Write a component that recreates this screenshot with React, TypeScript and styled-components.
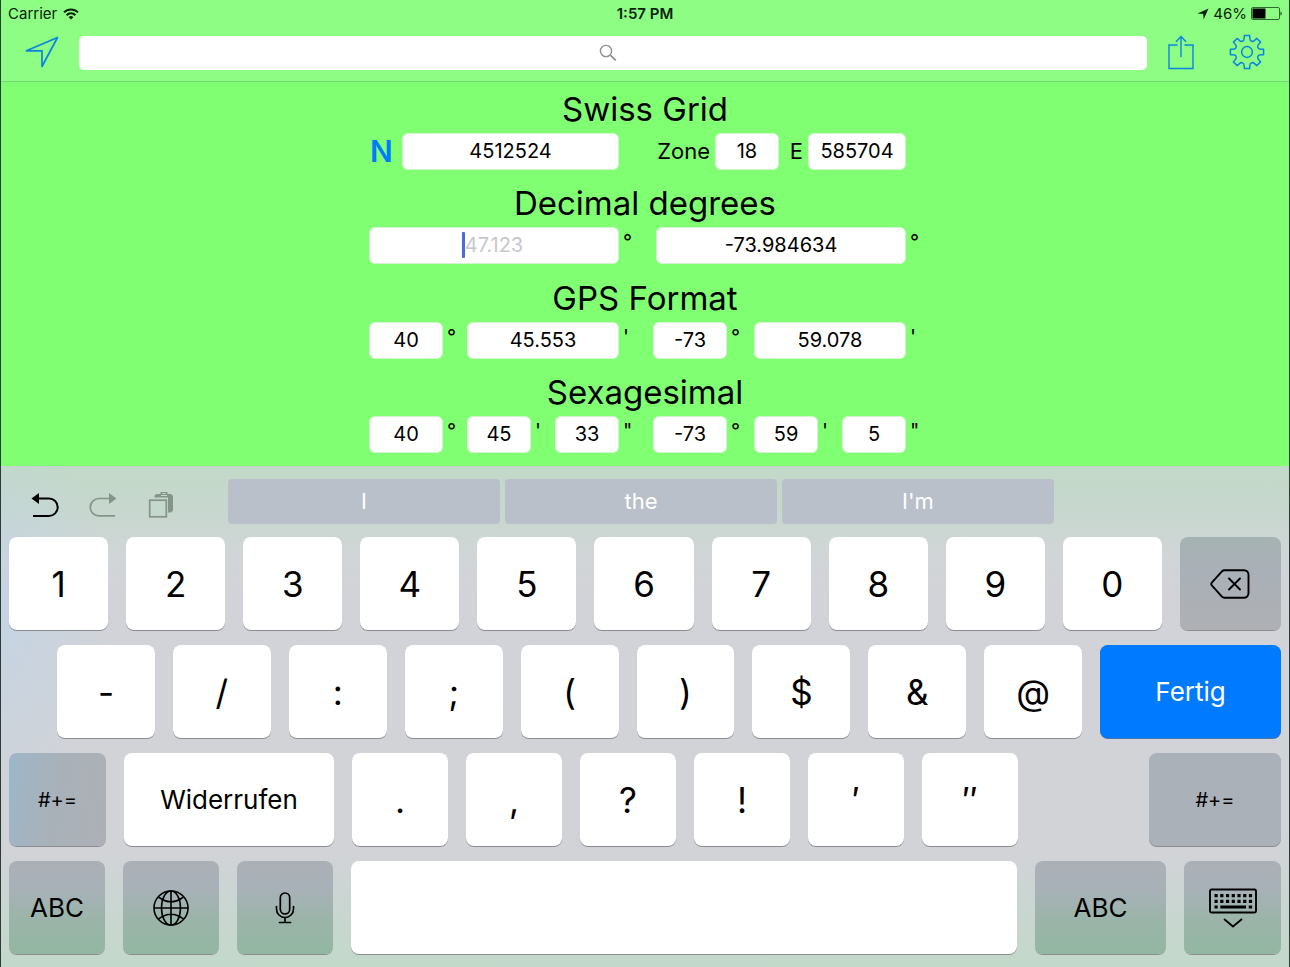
import React from "react";
import styled, { createGlobalStyle, css } from "styled-components";

const BLUE = "#007aff";
const TINT = "#0a84e4";

const GlobalStyle = createGlobalStyle`
  *, *::before, *::after { box-sizing: border-box; }
  html, body, #root { height: 100%; margin: 0; }
  body {
    font-family: Inter, Roboto, "Liberation Sans", sans-serif;
    color: #000;
    background: #80ff72;
  }
  button, input { font: inherit; color: inherit; margin: 0; }
`;

const Screen = styled.div`
  display: flex;
  flex-direction: column;
  min-height: 100vh;
  border: solid #2c3a38;
  border-width: 0 1px;
  background: #80ff72;
`;

const Header = styled.header`
  background: #8efd84;
  border-bottom: 1px solid #72d873;
`;

const StatusBar = styled.div`
  display: grid;
  grid-template-columns: 1fr auto 1fr;
  align-items: center;
  height: 27px;
  padding: 0 7px;
  font-size: 15px;
  line-height: 20px;
  color: #0a230c;
`;

const StatusGroup = styled.div<{ $end?: boolean }>`
  display: flex;
  align-items: center;
  gap: ${(p) => (p.$end ? 4 : 6)}px;
  justify-content: ${(p) => (p.$end ? "flex-end" : "flex-start")};
`;

const Clock = styled.time`
  font-weight: 600;
`;

const NavBar = styled.nav`
  display: flex;
  align-items: center;
  height: 54px;
  padding: 0 24px 2px 23px;
`;

const IconButton = styled.button`
  display: flex;
  align-items: center;
  justify-content: center;
  flex: none;
  width: 36px;
  height: 40px;
  padding: 0 0 2px;
  border: 0;
  background: none;
  color: ${TINT};
`;

const NavActions = styled.div`
  display: flex;
  gap: 30px;
`;

const SearchBox = styled.label`
  position: relative;
  flex: 1;
  margin: 0 16px 0 19px;
  height: 34px;
`;

const SearchInput = styled.input`
  display: block;
  width: 100%;
  height: 100%;
  padding: 0 12px;
  border: 0;
  border-radius: 5px;
  background: #fff;
  font-size: 16px;
  outline: none;
`;

const SearchGlyph = styled.span`
  position: absolute;
  inset: 0;
  display: flex;
  align-items: center;
  justify-content: center;
  padding-right: 10px;
  pointer-events: none;
`;

const Panel = styled.main`
  flex: 1;
  display: flex;
  flex-direction: column;
  justify-content: space-between;
  align-items: center;
  padding: 6px 0 13px;
`;

const Section = styled.section`
  width: 552px;
  max-width: 100%;
`;

const Title = styled.h2`
  margin: 0 0 3px;
  font-size: 33px;
  line-height: 42px;
  font-weight: 400;
  text-align: center;
`;

const Row = styled.div`
  display: flex;
  height: 37px;
`;

const Field = styled.span<{ $w: number }>`
  position: relative;
  flex: none;
  width: ${(p) => p.$w}px;
`;

const TextInput = styled.input`
  display: block;
  width: 100%;
  height: 37px;
  padding: 0 4px 1px;
  border: 1px solid #d3f3cf;
  border-radius: 6px;
  background: #fff;
  font-size: 20px;
  text-align: center;
  outline: none;
  caret-color: transparent;
  &::placeholder { color: #c7c7cd; opacity: 1; }
`;

const Caret = styled.span`
  position: absolute;
  top: 5px;
  left: calc(50% - 32px);
  width: 3px;
  height: 26px;
  border-radius: 1px;
  background: #4a69dc;
`;

const Unit = styled.span<{ $w: number }>`
  flex: none;
  width: ${(p) => p.$w}px;
  padding-left: 4px;
  font-size: 20px;
  line-height: 30px;
`;

const FieldLabel = styled.label<{ $w: number }>`
  flex: none;
  width: ${(p) => p.$w}px;
  padding-right: 5px;
  font-size: 22px;
  line-height: 36px;
  text-align: right;
`;

const Spacer = styled.span<{ $w: number }>`
  flex: none;
  width: ${(p) => p.$w}px;
`;

const HemisphereButton = styled.button`
  flex: none;
  width: 33px;
  padding: 0 8px 0 0;
  border: 0;
  background: none;
  color: ${BLUE};
  font-size: 30px;
  line-height: 37px;
  font-weight: 600;
`;

const Keyboard = styled.section`
  display: flex;
  flex-direction: column;
  gap: 15px;
  padding: 13px 8px;
  background:
    radial-gradient(ellipse 110px 190px at 0 30%, rgba(190, 212, 232, 0.65), rgba(190, 212, 232, 0)),
    linear-gradient(#c2d9c8 0, #c7d7ce 45px, #d1d5d7 90px, #d2d3d8 130px, #d1d3d7 390px, #c8d6d0 450px, #c2d9ca 100%);
`;

const AssistBar = styled.div`
  display: grid;
  grid-template-columns: 219fr 826fr 227fr;
  height: 45px;
  margin-bottom: -2px;
`;

const EditTools = styled.div`
  display: flex;
  align-items: center;
  gap: 22px;
  padding: 6px 0 0 18px;
`;

const ToolButton = styled.button`
  display: flex;
  justify-content: center;
  width: 36px;
  padding: 0;
  border: 0;
  background: none;
  color: #000;
  &:disabled { color: #849488; }
`;

const Suggestions = styled.div`
  display: grid;
  grid-template-columns: repeat(3, 1fr);
  gap: 5px;
`;

const Suggestion = styled.button`
  padding: 0;
  border: 0;
  border-radius: 4px;
  background: #bac0ca;
  color: #fff;
  font-size: 22px;
  line-height: 45px;
`;

const KeyRow = styled.div<{ $inset?: boolean }>`
  display: flex;
  gap: 18px;
  height: 93px;
  padding-left: ${(p) => (p.$inset ? 48 : 0)}px;
`;

type Tone = "light" | "grey" | "greyTop" | "greyLeft" | "greyBottom" | "primary";

const toneBackground: Record<Tone, string> = {
  light: "#fff",
  grey: "#abb1b8",
  greyTop: "linear-gradient(#a5b3b2, #a9b0b7 35%, #aeb0b4)",
  greyLeft: "linear-gradient(100deg, #9db6c9, #a9b1b8 50%, #adb0b6)",
  greyBottom: "linear-gradient(#abb0b6, #a8b1b8 30%, #9cb4aa 60%, #92b7a1)",
  primary: BLUE,
};

const Key = styled.button<{ $grow: number; $tone: Tone; $size: number }>`
  display: flex;
  align-items: center;
  justify-content: center;
  flex: ${(p) => p.$grow} 1 0;
  min-width: 0;
  padding: 0;
  border: 0;
  border-radius: 8px;
  background: ${(p) => toneBackground[p.$tone]};
  box-shadow: 0 1px 0 #8b8d91;
  font-size: ${(p) => p.$size}px;
  line-height: 48px;
  ${(p) =>
    p.$tone === "primary" &&
    css`
      color: #fff;
      box-shadow: 0 1px 0 #4676ad;
    `}
`;

const KeyGap = styled.span<{ $grow: number }>`
  flex: ${(p) => p.$grow} 1 0;
`;

/* ---------- drawings ---------- */

const Wifi = () => (
  <svg width="16" height="12" viewBox="0 0 16 12" fill="none" stroke="#0a230c" strokeWidth="2">
    <path d="M1 4.4a10 10 0 0 1 14 0" />
    <path d="M3.6 7.2a6.2 6.2 0 0 1 8.8 0" />
    <path d="M8 11.6 5.6 9.2a3.4 3.4 0 0 1 4.8 0z" fill="#0a230c" stroke="none" />
  </svg>
);

const SmallArrow = () => (
  <svg width="12" height="12" viewBox="0 0 12 12" fill="#0a230c">
    <path d="M11.5.5 6.6 11.5 6.2 6 .5 5.6z" />
  </svg>
);

const Battery = () => (
  <svg width="31" height="13" viewBox="0 0 31 13">
    <rect x=".5" y=".5" width="28" height="12" rx="1.5" fill="none" stroke="#2c6a2d" />
    <rect x="1.5" y="1.5" width="13" height="10" fill="#000" />
    <path d="M29.500 4.500c1.600.4 1.600 3.600 0 4z" fill="#123d14" />
  </svg>
);

const LocationArrow = () => (
  <svg width="34" height="32" viewBox="0 0 34 32" fill="none" stroke={TINT} strokeWidth="1.7" strokeLinejoin="round">
    <path d="M32.5 1.5 1.5 14.8H17V30.5z" />
  </svg>
);

const Share = () => (
  <svg width="26" height="35" viewBox="0 0 26 35" fill="none" stroke={TINT} strokeWidth="1.4">
    <path d="M9.5 10H1v23.5h24V10h-8.5" />
    <path d="M13 22V1.5M8 6.8l5-5.2 5 5.2" />
  </svg>
);

const gearOutline = (() => {
  const point = (radius: number, degrees: number) => {
    const a = (degrees * Math.PI) / 180;
    return `${(18 + radius * Math.cos(a)).toFixed(2)} ${(18 + radius * Math.sin(a)).toFixed(2)}`;
  };
  let d = "";
  for (let i = 0; i < 8; i++) {
    const a = i * 45 - 90;
    d += `${i ? "L" : "M"}${point(13.8, a - 12)}L${point(16.8, a - 9)}L${point(16.8, a + 9)}L${point(13.8, a + 12)}`;
    d += `C${point(11.2, a + 15)} ${point(11.2, a + 30)} ${point(13.8, a + 33)}`;
  }
  return d + "Z";
})();

const Gear = () => (
  <svg width="36" height="36" viewBox="0 0 36 36" fill="none" stroke={TINT} strokeWidth="1.5" strokeLinejoin="round">
    <path d={gearOutline} />
    <circle cx="18" cy="18" r="5.4" />
  </svg>
);

const Magnifier = () => (
  <svg width="18" height="18" viewBox="0 0 18 18" fill="none" stroke="#8e8e93" strokeWidth="1.4">
    <circle cx="7" cy="7" r="5.6" />
    <path d="m11.2 11.2 5.6 5.2" strokeWidth="1.8" />
  </svg>
);

const Undo = () => (
  <svg width="28" height="26" viewBox="0 0 28 26" fill="none" stroke="currentColor" strokeWidth="2">
    <path d="M6 6.5h12a8.7 8.7 0 0 1 0 17.4H2" />
    <path d="M8 1v11L.5 6.5z" fill="currentColor" stroke="none" />
  </svg>
);

const Redo = () => (
  <svg width="28" height="26" viewBox="0 0 28 26" fill="none" stroke="currentColor" strokeWidth="1.7">
    <path d="M22 6.500H10a8.700 8.700 0 0 0 0 17.400h16" />
    <path d="M20 1v11l7.500-5.500z" fill="currentColor" stroke="none" />
  </svg>
);

const Paste = () => (
  <svg width="26" height="27" viewBox="0 0 26 27">
    <path d="M6.5 6.500V4.500L8.500 3h4V1h7v2h3.500l2 2v14.500l-2 2h-3V6.500z" fill="currentColor" />
    <path d="M13 4.500h6M14.500 2.500h3" stroke="#c4d8cb" strokeWidth="1" />
    <rect x="1.700" y="9.200" width="16.600" height="16.600" fill="#c4d8cd" stroke="currentColor" strokeWidth="1.700" />
  </svg>
);

const Backspace = () => (
  <svg width="40" height="30" viewBox="0 0 40 30" fill="none" stroke="#000" strokeWidth="1.9" strokeLinecap="round" strokeLinejoin="round">
    <path d="M14.5 1.2H34a4.5 4.5 0 0 1 4.5 4.5v18.600a4.500 4.500 0 0 1-4.500 4.500H14.500q-1.500 0-2.600-1.100L1.800 16.300q-1.100-1.300 0-2.600L11.900 2.300q1.100-1.100 2.600-1.100z" />
    <path d="m19 9.500 11 11M30 9.500l-11 11" />
  </svg>
);

const Globe = () => (
  <svg width="36" height="36" viewBox="0 0 36 36" fill="none" stroke="#000" strokeWidth="1.6">
    <circle cx="18" cy="18" r="17" />
    <ellipse cx="18" cy="18" rx="9.5" ry="17" />
    <path d="M18 1v34M1 18h34M5.5 7Q18 16.500 30.500 7M5.500 29Q18 19.500 30.500 29" />
  </svg>
);

const Mic = () => (
  <svg width="20" height="32" viewBox="0 0 20 32" fill="none" stroke="#000" strokeWidth="1.7" strokeLinecap="round">
    <rect x="5.3" y="1" width="9.4" height="21" rx="4.7" />
    <path d="M1.5 14.500V17a8.500 8.500 0 0 0 17 0v-2.500M10 25.500v5M4.500 30.500h11" />
  </svg>
);

const HideKeyboard = () => (
  <svg width="48" height="40" viewBox="0 0 48 40" fill="none" stroke="#000">
    <rect x="1" y="1.500" width="46" height="23" rx="1.500" strokeWidth="1.900" />
    <path d="M5.500 7.600h38" strokeWidth="3.200" strokeDasharray="3.200 2.530" />
    <path d="M5.500 13.300h38" strokeWidth="3.200" strokeDasharray="3.200 2.530" />
    <path d="M5.500 19h3.200M11.300 19h25.800M39.700 19h3.400" strokeWidth="3" />
    <path d="m15 31 9 7.500 9-7.500" strokeWidth="1.800" />
  </svg>
);

/* ---------- parts ---------- */

type NumberFieldProps = {
  label: string;
  width: number;
  value?: string;
  placeholder?: string;
  id?: string;
  active?: boolean;
};

const NumberField = ({ label, width, value, placeholder, id, active }: NumberFieldProps) => (
  <Field $w={width}>
    <TextInput id={id} aria-label={id ? undefined : label} defaultValue={value} placeholder={placeholder} inputMode="decimal" />
    {active && <Caret />}
  </Field>
);

type KeyCapProps = {
  children?: React.ReactNode;
  grow?: number;
  tone?: Tone;
  size?: number;
  label?: string;
};

const KeyCap = ({ children, grow = 99, tone = "light", size = 35, label }: KeyCapProps) => (
  <Key type="button" $grow={grow} $tone={tone} $size={size} aria-label={label}>
    {children}
  </Key>
);

const digits = ["1", "2", "3", "4", "5", "6", "7", "8", "9", "0"];
const symbols = ["-", "/", ":", ";", "(", ")", "$", "&", "@"];
const punctuation = [".", ",", "?", "!", "′", "″"];

export default function App() {
  return (
    <>
      <GlobalStyle />
      <Screen>
        <Header>
          <StatusBar>
            <StatusGroup>
              <span>Carrier</span>
              <Wifi />
            </StatusGroup>
            <Clock>1:57 PM</Clock>
            <StatusGroup $end>
              <SmallArrow />
              <span>46%</span>
              <Battery />
            </StatusGroup>
          </StatusBar>
          <NavBar>
            <IconButton type="button" aria-label="Current location"><LocationArrow /></IconButton>
            <SearchBox>
              <SearchInput type="search" aria-label="Search" />
              <SearchGlyph><Magnifier /></SearchGlyph>
            </SearchBox>
            <NavActions>
              <IconButton type="button" aria-label="Share"><Share /></IconButton>
              <IconButton type="button" aria-label="Settings"><Gear /></IconButton>
            </NavActions>
          </NavBar>
        </Header>

        <Panel>
          <Section>
            <Title>Swiss Grid</Title>
            <Row>
              <HemisphereButton type="button">N</HemisphereButton>
              <NumberField label="Northing" width={217} value="4512524" />
              <Spacer $w={36} />
              <FieldLabel $w={60} htmlFor="zone">Zone</FieldLabel>
              <NumberField id="zone" label="Zone" width={64} value="18" />
              <FieldLabel $w={29} htmlFor="easting">E</FieldLabel>
              <NumberField id="easting" label="Easting" width={98} value="585704" />
            </Row>
          </Section>

          <Section>
            <Title>Decimal degrees</Title>
            <Row>
              <NumberField label="Latitude" width={250} placeholder="47.123" active />
              <Unit $w={37}>°</Unit>
              <NumberField label="Longitude" width={250} value="-73.984634" />
              <Unit $w={15}>°</Unit>
            </Row>
          </Section>

          <Section>
            <Title>GPS Format</Title>
            <Row>
              <NumberField label="Latitude degrees" width={74} value="40" />
              <Unit $w={24}>°</Unit>
              <NumberField label="Latitude minutes" width={152} value="45.553" />
              <Unit $w={34}>'</Unit>
              <NumberField label="Longitude degrees" width={74} value="-73" />
              <Unit $w={27}>°</Unit>
              <NumberField label="Longitude minutes" width={152} value="59.078" />
              <Unit $w={15}>'</Unit>
            </Row>
          </Section>

          <Section>
            <Title>Sexagesimal</Title>
            <Row>
              <NumberField label="Latitude degrees" width={74} value="40" />
              <Unit $w={24}>°</Unit>
              <NumberField label="Latitude minutes" width={64} value="45" />
              <Unit $w={24}>'</Unit>
              <NumberField label="Latitude seconds" width={64} value="33" />
              <Unit $w={34}>"</Unit>
              <NumberField label="Longitude degrees" width={74} value="-73" />
              <Unit $w={27}>°</Unit>
              <NumberField label="Longitude minutes" width={64} value="59" />
              <Unit $w={24}>'</Unit>
              <NumberField label="Longitude seconds" width={64} value="5" />
              <Unit $w={15}>"</Unit>
            </Row>
          </Section>
        </Panel>

        <Keyboard aria-label="Keyboard">
          <AssistBar>
            <EditTools>
              <ToolButton type="button" aria-label="Undo"><Undo /></ToolButton>
              <ToolButton type="button" aria-label="Redo" disabled><Redo /></ToolButton>
              <ToolButton type="button" aria-label="Paste" disabled><Paste /></ToolButton>
            </EditTools>
            <Suggestions>
              <Suggestion type="button">I</Suggestion>
              <Suggestion type="button">the</Suggestion>
              <Suggestion type="button">I'm</Suggestion>
            </Suggestions>
          </AssistBar>

          <KeyRow>
            {digits.map((d) => <KeyCap key={d}>{d}</KeyCap>)}
            <KeyCap grow={101} tone="greyTop" label="Delete"><Backspace /></KeyCap>
          </KeyRow>

          <KeyRow $inset>
            {symbols.map((s) => <KeyCap key={s} grow={98}>{s}</KeyCap>)}
            <KeyCap grow={181} tone="primary" size={26}>Fertig</KeyCap>
          </KeyRow>

          <KeyRow>
            <KeyCap grow={97} tone="greyLeft" size={20}>#+=</KeyCap>
            <KeyCap grow={210} size={26}>Widerrufen</KeyCap>
            {punctuation.map((p) => <KeyCap key={p} grow={96}>{p}</KeyCap>)}
            <KeyGap $grow={95} />
            <KeyCap grow={132} tone="grey" size={20}>#+=</KeyCap>
          </KeyRow>

          <KeyRow>
            <KeyCap grow={96} tone="greyBottom" size={26}>ABC</KeyCap>
            <KeyCap grow={96} tone="greyBottom" label="Next keyboard"><Globe /></KeyCap>
            <KeyCap grow={96} tone="greyBottom" label="Dictation"><Mic /></KeyCap>
            <KeyCap grow={666} label="Space" />
            <KeyCap grow={131} tone="greyBottom" size={26}>ABC</KeyCap>
            <KeyCap grow={97} tone="greyBottom" label="Hide keyboard"><HideKeyboard /></KeyCap>
          </KeyRow>
        </Keyboard>
      </Screen>
    </>
  );
}
